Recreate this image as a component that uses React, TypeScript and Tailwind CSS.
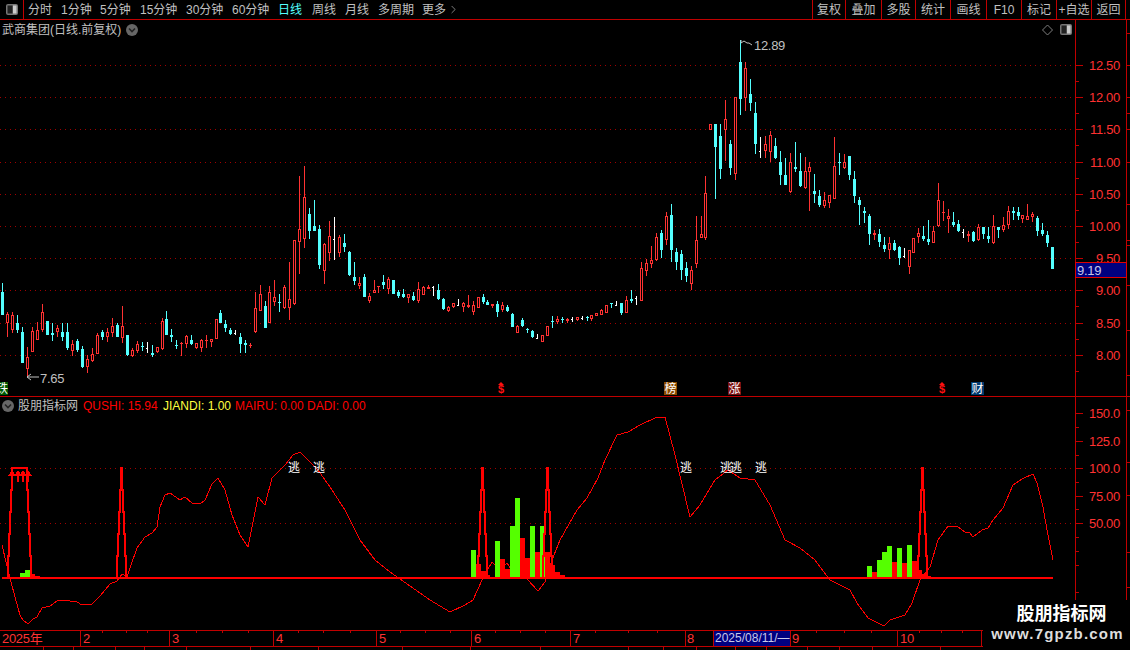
import { ChevronRight } from "lucide-react";

type Candle = [number, "r" | "c" | "w", number, number, number, number];

const RED = "#ff3232";
const CYAN = "#54ffff";
const LINE = "#c00000";

// x, kind, high y, low y, body top y, body bottom y (all in page pixels)
const candles: Candle[] = [
  [2,"c",283,315,292,315],[7,"r",312,337,314,323],[12,"r",312,333,315,330],[17,"c",315,333,323,330],[22,"c",327,363,332,363],
  [27,"r",347,377,357,369],[32,"r",327,352,331,352],[37,"r",322,340,330,340],[42,"r",304,332,312,330],[47,"c",321,335,321,335],
  [52,"c",323,341,333,335],[57,"r",325,337,328,332],[62,"c",323,341,332,337],[67,"c",323,350,332,348],[72,"r",340,356,344,351],
  [77,"c",339,352,341,350],[82,"c",346,368,349,367],[87,"r",355,373,359,367],[92,"r",348,362,354,361],[97,"r",333,354,335,354],
  [102,"c",330,340,332,337],[107,"r",328,342,332,337],[112,"r",318,337,326,333],[117,"c",323,337,325,337],[122,"r",306,343,326,338],
  [127,"c",335,356,335,355],[132,"r",348,357,350,356],[137,"r",341,353,344,351],[142,"c",342,351,346,347],[147,"w",342,353,348,348],
  [152,"c",345,357,353,355],[157,"r",347,353,347,352],[162,"r",318,350,321,349],[166,"c",311,335,319,335],[171,"c",329,342,335,337],
  [176,"c",340,349,345,346],[181,"r",342,356,343,344],[186,"r",335,348,336,344],[191,"c",335,345,340,344],[196,"r",343,349,343,348],
  [201,"r",339,352,340,348],[206,"r",335,348,340,341],[211,"r",339,347,339,342],[216,"r",319,339,319,339],[220,"c",310,323,313,323],
  [225,"c",320,332,324,328],[230,"c",328,335,330,334],[235,"w",330,335,333,333],[240,"c",333,353,337,344],[245,"c",340,353,343,345],
  [250,"r",343,348,345,346],[255,"r",292,333,308,332],[260,"r",285,311,294,311],[265,"c",301,328,306,328],[269,"r",286,323,292,323],
  [274,"r",280,306,297,302],[279,"c",294,312,302,303],[284,"r",285,309,287,308],[289,"r",262,320,299,308],[294,"r",240,305,240,304],
  [299,"r",176,274,229,242],[304,"r",166,248,197,239],[309,"c",208,239,214,231],[314,"c",200,231,226,231],[319,"c",225,269,229,265],
  [324,"r",243,284,244,271],[329,"r",221,261,236,253],[334,"w",217,260,239,239],[339,"r",235,257,237,253],[344,"c",234,252,243,247],
  [349,"c",251,276,252,275],[354,"c",262,285,277,281],[359,"r",277,289,283,286],[364,"c",274,297,277,297],[369,"r",293,303,296,301],
  [374,"r",280,293,290,293],[378,"r",286,293,286,287],[383,"c",275,289,282,285],[388,"r",277,294,279,289],[393,"c",280,294,280,294],
  [398,"c",290,298,292,296],[403,"c",289,298,294,297],[408,"r",294,303,294,298],[413,"c",292,301,296,300],[418,"r",282,303,289,301],
  [423,"r",286,295,287,295],[428,"r",285,289,287,289],[433,"w",286,296,287,287],[438,"c",284,300,290,299],[443,"c",298,310,299,309],
  [448,"r",306,312,307,311],[453,"r",303,308,303,307],[458,"w",299,306,305,305],[463,"r",302,312,303,307],[468,"r",295,308,305,307],
  [473,"r",301,315,305,312],[478,"r",297,308,297,308],[483,"c",294,304,297,302],[487,"c",300,305,302,305],[492,"r",304,308,304,306],
  [497,"c",301,317,304,312],[502,"r",302,312,305,310],[507,"c",305,312,307,311],[512,"c",313,327,314,327],[517,"r",325,333,326,333],
  [522,"c",318,327,320,326],[527,"c",328,333,329,330],[532,"c",330,338,331,337],[537,"w",334,339,338,338],[542,"r",335,342,335,342],
  [547,"r",326,336,326,336],[552,"c",316,328,321,322],[557,"r",316,324,319,322],[562,"c",317,323,319,320],[567,"r",318,323,319,321],
  [572,"w",317,322,319,319],[577,"r",317,321,317,320],[582,"w",316,320,318,318],[587,"c",316,321,317,318],[591,"r",315,321,315,319],
  [596,"r",313,316,313,316],[601,"r",309,315,310,315],[606,"r",305,313,305,313],[611,"c",303,308,303,304],[616,"w",301,306,305,305],
  [621,"c",303,315,303,313],[626,"r",296,313,300,313],[631,"c",290,303,299,301],[636,"w",296,305,298,298],[641,"r",262,301,268,301],
  [646,"r",259,276,263,271],[651,"r",246,268,260,264],[656,"r",233,261,237,260],[661,"c",230,258,233,250],[666,"r",212,245,216,240],
  [671,"c",204,262,215,250],[676,"c",248,270,252,262],[681,"c",250,280,254,270],[686,"c",262,282,268,276],[691,"r",266,290,270,284],
  [696,"r",216,268,240,264],[701,"r",216,238,234,238],[705,"r",176,240,193,238],[710,"r",124,130,124,130],[715,"c",124,199,124,147],
  [720,"c",124,179,136,169],[725,"r",100,161,119,130],[730,"c",140,175,144,168],[735,"r",97,180,97,174],[740,"c",40,115,62,99],
  [745,"r",62,111,68,98],[750,"c",79,111,94,103],[755,"c",102,154,113,144],[760,"w",137,158,151,151],[765,"r",136,158,144,151],
  [770,"r",131,162,135,152],[775,"c",138,159,146,158],[780,"c",151,185,162,175],[785,"c",158,185,175,185],[790,"r",153,193,162,192],
  [795,"c",142,172,167,169],[800,"c",153,187,171,186],[805,"r",157,189,171,188],[809,"r",162,211,167,172],[814,"c",174,203,191,194],
  [819,"c",190,207,196,205],[824,"r",192,208,200,206],[829,"r",195,208,195,203],[834,"r",137,199,166,199],[839,"c",153,175,162,163],
  [844,"r",154,169,162,168],[849,"c",156,180,156,175],[854,"c",171,203,179,196],[859,"c",197,225,200,205],[864,"c",207,223,211,213],
  [869,"c",214,245,216,234],[874,"r",230,240,233,235],[879,"c",229,247,234,242],[884,"c",237,252,245,249],[889,"r",237,259,243,250],
  [894,"c",240,251,243,250],[899,"c",246,265,247,258],[904,"w",248,258,256,256],[909,"r",250,274,250,267],[913,"r",238,253,238,253],
  [918,"r",228,243,233,237],[923,"c",226,241,236,239],[928,"c",220,245,239,242],[933,"r",226,243,231,243],[938,"r",183,227,200,226],
  [943,"r",201,221,212,213],[948,"r",209,233,216,219],[953,"c",212,227,222,225],[958,"c",220,232,224,231],[963,"w",229,238,232,232],
  [968,"r",231,242,234,236],[973,"c",231,242,232,241],[978,"r",224,241,227,240],[983,"c",227,239,227,234],[988,"c",227,243,236,239],
  [993,"r",215,244,226,243],[998,"c",227,238,227,230],[1003,"r",217,232,225,230],[1008,"r",206,229,211,225],[1013,"c",207,220,211,213],
  [1018,"c",207,220,212,216],[1022,"r",215,223,215,219],[1027,"r",204,220,216,220],[1032,"r",212,222,214,217],[1037,"c",216,236,218,231],
  [1042,"c",223,236,230,234],[1047,"c",231,247,235,243],[1052,"c",247,269,247,269],
];

const grid = [65, 97, 129, 162, 194, 226, 258, 290, 323, 355];
const prices = ["12.50", "12.00", "11.50", "11.00", "10.50", "10.00", "9.50", "9.00", "8.50", "8.00"];

const qushi =
  "2,545 7,566 10,578 15,597 20,615 23,620 28,624 33,619 37,617 42,608 50,606 57,601 62,600 77,602 82,605 92,604 100,596 110,584 117,581 122,574 127,577 130,568 137,548 145,537 152,533 157,527 160,507 165,495 170,493 180,500 185,497 192,503 200,504 205,500 212,484 218,478 225,490 232,515 240,535 248,547 258,497 265,505 272,478 285,465 293,455 300,452 308,460 318,470 330,487 345,510 360,540 375,560 390,572 410,586 430,600 450,612 465,605 473,600 483,578 492,562 500,570 507,563 515,575 527,579 538,591 545,582 552,560 560,540 577,510 587,498 598,478 605,460 617,435 628,432 640,425 655,418 665,417 675,455 690,517 700,505 715,480 728,470 740,478 755,480 770,505 785,540 800,548 815,560 830,580 850,590 857,603 868,618 884,626 890,620 905,615 912,603 920,580 930,567 938,540 948,526 957,526 965,532 969,532 973,537 982,530 988,528 993,520 1003,508 1013,485 1022,479 1033,474 1037,483 1043,507 1047,530 1053,560";

// x, width, top y
const greenBars = [
  [20,5,573],[25,5,570],[471,5,550],[495,5,541],[510,5,526],[515,5,498],[530,5,526],[540,5,526],
  [867,5,566],[877,5,560],[882,5,552],[887,5,546],[897,5,548],[907,5,545],
];
const redBars = [
  [30,5,574],[35,5,576],[476,5,564],[481,5,571],[486,4,575],[500,5,559],[505,5,569],[520,5,538],[525,5,558],
  [535,5,552],[545,5,552],[550,5,565],[555,5,572],[560,5,575],[872,5,572],[892,5,562],[902,5,563],[912,5,561],
  [917,5,570],[922,5,574],[927,4,576],
];

// stair up from x=a, flat top to x=c, stair back down, 1px per level
const spike = (a: number, c: number) => {
  const ys = [578, 556, 534, 512, 490, 468];
  let p = `M${a} 578`;
  for (let i = 1; i < 6; i++) p += ` V${ys[i]}${i < 5 ? ` H${a + i}` : ""}`;
  p += ` H${c}`;
  for (let i = 4; i >= 0; i--) p += ` V${ys[i]}${i > 0 ? ` H${c + 5 - i}` : ""}`;
  return p;
};

const leftTabs = [
  ["分时", "w-[33px]"], ["1分钟", "w-[39px]"], ["5分钟", "w-[40px]"], ["15分钟", "w-[46px]"], ["30分钟", "w-[46px]"],
  ["60分钟", "w-[46px]"], ["日线", "w-[34px] text-[#54ffff]"], ["周线", "w-[33px]"], ["月线", "w-[33px]"], ["多周期", "w-[44px]"], ["更多", "w-[26px]"],
];
const rightTabs = [
  ["复权", "w-[33px]"], ["叠加", "w-[36px]"], ["多股", "w-[34px]"], ["统计", "w-[35px]"], ["画线", "w-[36px]"],
  ["F10", "w-[35px]"], ["标记", "w-[35px]"], ["+自选", "w-[35px]"], ["返回", "w-[35px]"],
];
const months = [
  ["2025年", "w-[81px]"], ["2", "w-[89px]"], ["3", "w-[104px]"], ["4", "w-[103px]"], ["5", "w-[95px]"],
  ["6", "w-[99px]"], ["7", "w-[115px]"],
];
const axisTicks = [102,126,147,196,222,248,298,323,350,400,425,450,495,520,545,595,628,657,816,844,871,919,941,962];
const statusTicks = [43,73,115,144,186,250,318,402,470,540,628,663,696,735,766,807,839,872,940];

const PanelIcon = ({ className }: { className: string }) => (
  <svg viewBox="0 0 12 11" className={className}>
    <rect width="12" height="11" rx="2" fill="#777" />
    <rect x="1.5" y="1.5" width="5" height="8" fill="#222" />
    <rect x="7" y="1.5" width="3.5" height="8" fill="#ccc" />
  </svg>
);

const Chevron = ({ className }: { className: string }) => (
  <svg viewBox="0 0 12 12" className={className}>
    <circle cx="6" cy="6" r="6" fill="#666" />
    <path d="M3 4.5 L6 7.5 L9 4.5" fill="none" stroke="#222" strokeWidth="1.6" />
  </svg>
);

const CandleMark = ({ c }: { c: Candle }) => {
  const [x, kind, hi, lo, top, bot] = c;
  if (kind === "w") {
    return (
      <g fill="#fff">
        <rect x={x} y={hi} width={1} height={lo - hi} />
        <rect x={x - 1} y={top} width={1} height={1} />
      </g>
    );
  }
  if (kind === "c") {
    return (
      <g fill={CYAN}>
        <rect x={x} y={hi} width={1} height={lo - hi} />
        <rect x={x - 1} y={top} width={3} height={Math.max(bot - top, 1)} />
      </g>
    );
  }
  return (
    <g>
      <rect x={x} y={hi} width={1} height={lo - hi} fill={RED} />
      {bot - top > 2 ? (
        <rect x={x - 0.5} y={top + 0.5} width={2} height={bot - top - 1} fill="#000" stroke={RED} />
      ) : (
        <rect x={x - 1} y={top} width={3} height={Math.max(bot - top, 1)} fill={RED} />
      )}
    </g>
  );
};

const Marker = ({ x, fill, label }: { x: number; fill: string; label: string }) => (
  <g>
    <rect x={x} y={382} width={13} height={13} fill={fill} />
    <text x={x + 0.5} y={393} fontSize="12" className="fill-white">{label}</text>
  </g>
);

const Dollar = ({ x }: { x: number }) => (
  <g>
    <polygon points={`${x - 3},385 ${x},382 ${x + 3},385`} fill="#ff1010" />
    <text x={x} y={393} textAnchor="middle" fontSize="11" fontWeight="700" className="fill-[#ff1010]">$</text>
  </g>
);

const AxisLines = ({ y, h, major, minor, edge }: { y: number; h: number; major: number[]; minor: number[]; edge: number[] }) => (
  <g fill={LINE}>
    <rect x={1075} y={y} width={1} height={h} />
    <rect x={1126} y={y} width={1} height={h} />
    {major.map((t) => <rect key={t} x={1076} y={t} width={7} height={1} />)}
    {minor.map((t) => <rect key={t} x={1076} y={t} width={3} height={1} />)}
    {edge.map((t) => <rect key={t} x={1127} y={t} width={3} height={1} />)}
  </g>
);

const App = () => {
  return (
    <div className="relative flex h-[650px] w-[1130px] flex-col overflow-hidden bg-black font-['Liberation_Sans','Noto_Sans_CJK_SC',sans-serif] text-[#c0c0c0]">
      {/* top bar */}
      <div className="flex h-[20px] shrink-0 items-center justify-between border-b border-[#c00000] text-[12px]">
        <div className="flex h-full items-center">
          <div className="mr-[4px] flex h-full w-[24px] items-center justify-center border-r border-[#c00000]">
            <PanelIcon className="h-[11px] w-[12px]" />
          </div>
          {leftTabs.map(([label, cls]) => (
            <span key={label} className={`whitespace-nowrap ${cls}`}>{label}</span>
          ))}
          <ChevronRight size={13} strokeWidth={1.2} className="-ml-[1px]" />
        </div>
        <div className="flex h-full pr-[4px]">
          {rightTabs.map(([label, cls]) => (
            <span key={label} className={`flex items-center justify-center whitespace-nowrap border-l border-[#c00000] last:border-r ${cls}`}>{label}</span>
          ))}
        </div>
      </div>

      {/* price panel */}
      <div className="relative flex h-[377px] shrink-0 border-b border-[#c00000]">
        <div className="absolute left-[2px] top-[2px] flex items-center gap-[5px] text-[12px] leading-[16px]">
          <span>武商集团(日线.前复权)</span>
          <Chevron className="h-[12px] w-[12px]" />
        </div>
        <PanelIcon className="absolute left-[1060px] top-[4px] h-[11px] w-[12px]" />
        <svg viewBox="0 20 1130 376" width={1130} height={376} className="block">
          {grid.map((y) => (
            <line key={y} x1={0} x2={1075} y1={y + 0.5} y2={y + 0.5} stroke="#a00000" strokeDasharray="1 4" />
          ))}
          <g shapeRendering="crispEdges">
            {candles.map((c) => <CandleMark key={c[0]} c={c} />)}
          </g>
          <polyline points="741,40 741,43 744,41 747,43 749,43 752,45" fill="none" stroke="#c0c0c0" />
          <text x={754} y={50} fontSize="13" letterSpacing="-0.3" className="fill-[#c0c0c0]">12.89</text>
          <path d="M27 377 H39 M27 377 L31 374 M27 377 L31 380" fill="none" stroke="#c0c0c0" />
          <text x={40} y={383} fontSize="13" letterSpacing="-0.3" className="fill-[#c0c0c0]">7.65</text>

          <rect x={0} y={382} width={8} height={13} fill="#005a00" />
          <text x={-4} y={393} fontSize="12" className="fill-white">铁</text>
          <Dollar x={501} />
          <Marker x={664} fill="#8a4a00" label="榜" />
          <Marker x={728} fill="#7a1010" label="涨" />
          <Dollar x={942} />
          <Marker x={971} fill="#003a70" label="财" />

          <path d="M1047.5 25 L1052.5 30 L1047.5 35 L1042.5 30 Z" fill="none" stroke="#808080" />
          <AxisLines
            y={20}
            h={376}
            major={grid}
            minor={[81, 113, 145, 178, 210, 242, 274, 306, 339, 371]}
            edge={[33, 65, 97, 113, 129, 162, 204, 240, 245, 285, 330, 375]}
          />
          {prices.map((p, i) => (
            <text key={p} x={1120} y={grid[i] + 5} textAnchor="end" fontSize="13" letterSpacing="-0.3" className="fill-[#ff3232]">{p}</text>
          ))}
          <rect x={1075.5} y={262.5} width={51} height={15} fill="#000080" stroke="#e00000" />
          <text x={1077} y={275} fontSize="13" letterSpacing="-0.3" className="fill-[#c8c8e8]">9.19</text>
        </svg>
      </div>

      {/* indicator panel */}
      <div className="relative h-[233px] shrink-0">
        <div className="absolute left-[2px] top-[1px] flex items-center text-[12px] leading-[16px]">
          <Chevron className="mr-[4px] h-[12px] w-[12px]" />
          <span className="w-[65px]">股朋指标网</span>
          <span className="w-[80px] text-[#ff0000]">QUSHI: 15.94</span>
          <span className="w-[72px] text-[#ffff40]">JIANDI: 1.00</span>
          <span className="w-[72px] text-[#ff0000]">MAIRU: 0.00</span>
          <span className="text-[#ff0000]">DADI: 0.00</span>
        </div>
        <svg viewBox="0 397 1130 233" width={1130} height={233} className="block">
          {[468, 523].map((y) => (
            <line key={y} x1={0} x2={1075} y1={y + 0.5} y2={y + 0.5} stroke="#a00000" strokeDasharray="1 4" />
          ))}
          <polyline points={qushi} fill="none" stroke="#ff0000" shapeRendering="crispEdges" />
          <g shapeRendering="crispEdges">
            {greenBars.map(([x, w, y]) => <rect key={x} x={x} y={y} width={w} height={578 - y} fill="#55ff00" />)}
            {redBars.map(([x, w, y]) => <rect key={x} x={x} y={y} width={w} height={578 - y} fill="#ff0000" />)}
            {[[8, 27], [117, 122], [478, 483], [543, 548], [918, 923]].map(([a, c]) => (
              <path key={a} d={spike(a, c)} fill="none" stroke="#ff0000" strokeWidth={2} />
            ))}
            <rect x={2} y={577} width={1051} height={2} fill="#ff0000" />
            <rect x={13} y={467} width={15} height={2} fill="#ff0000" />
            {[12, 18, 23, 28].map((x) => (
              <g key={x} fill="#ff0000">
                <polygon points={`${x},470 ${x + 4},476 ${x - 4},476`} />
                <rect x={x - 1} y={476} width={2} height={6} />
              </g>
            ))}
          </g>
          {[294, 319, 686, 726, 736, 761].map((x) => (
            <text key={x} x={x} y={472} textAnchor="middle" fontSize="12" className="fill-white">逃</text>
          ))}
          <AxisLines
            y={397}
            h={233}
            major={[413, 441, 468, 496, 523]}
            minor={[427, 455, 482, 509, 537, 551, 565, 592]}
            edge={[410, 462, 495, 552, 587]}
          />
          {[["150.0", 413], ["125.0", 441], ["100.0", 468], ["75.00", 496], ["50.00", 523]].map(([p, y]) => (
            <text key={p} x={1120} y={Number(y) + 5} textAnchor="end" fontSize="13" letterSpacing="-0.3" className="fill-[#ff3232]">{p}</text>
          ))}
        </svg>
      </div>

      {/* time axis */}
      <div className="relative flex h-[17px] shrink-0 items-center border-y border-[#c00000] text-[13px] leading-[15px] tracking-[-0.3px] text-[#ff3232]">
        {months.map(([label, cls]) => (
          <span key={label} className={`h-full whitespace-nowrap border-r border-[#c00000] pl-[2px] ${cls}`}>{label}</span>
        ))}
        <span className="h-full w-[27px] whitespace-nowrap pl-[1px]">8</span>
        <span className="h-full w-[78px] whitespace-nowrap border-x border-[#c00000] bg-[#000080] pl-[1px] text-[12px] tracking-normal text-[#c8c8e8]">2025/08/11/—</span>
        <span className="h-full w-[107px] whitespace-nowrap border-r border-[#c00000] pl-[1px]">9</span>
        <span className="h-full w-[84px] whitespace-nowrap border-r border-[#c00000] pl-[2px]">10</span>
        {axisTicks.map((x) => (
          <i key={x} className="absolute top-0 h-[2px] w-px bg-[#c00000]" style={{ left: x }} />
        ))}
      </div>

      {/* cut-off status strip */}
      <div className="relative h-[3px] shrink-0 overflow-hidden">
        {statusTicks.map((x) => (
          <i key={x} className="absolute top-0 h-[3px] w-px bg-[#c00000]" style={{ left: x }} />
        ))}
      </div>

      {/* watermark */}
      <div className="absolute bottom-0 right-0 flex h-[50px] w-[147px] flex-col items-center bg-black pl-[10px] pt-[3px] text-white">
        <span className="text-[18px] font-bold leading-[22px]">股朋指标网</span>
        <span className="-ml-[8px] whitespace-nowrap text-[15px] font-bold leading-[18px] tracking-[1.2px] text-[#dddddd]">www.7gpzb.com</span>
      </div>
    </div>
  );
};

export default App;
